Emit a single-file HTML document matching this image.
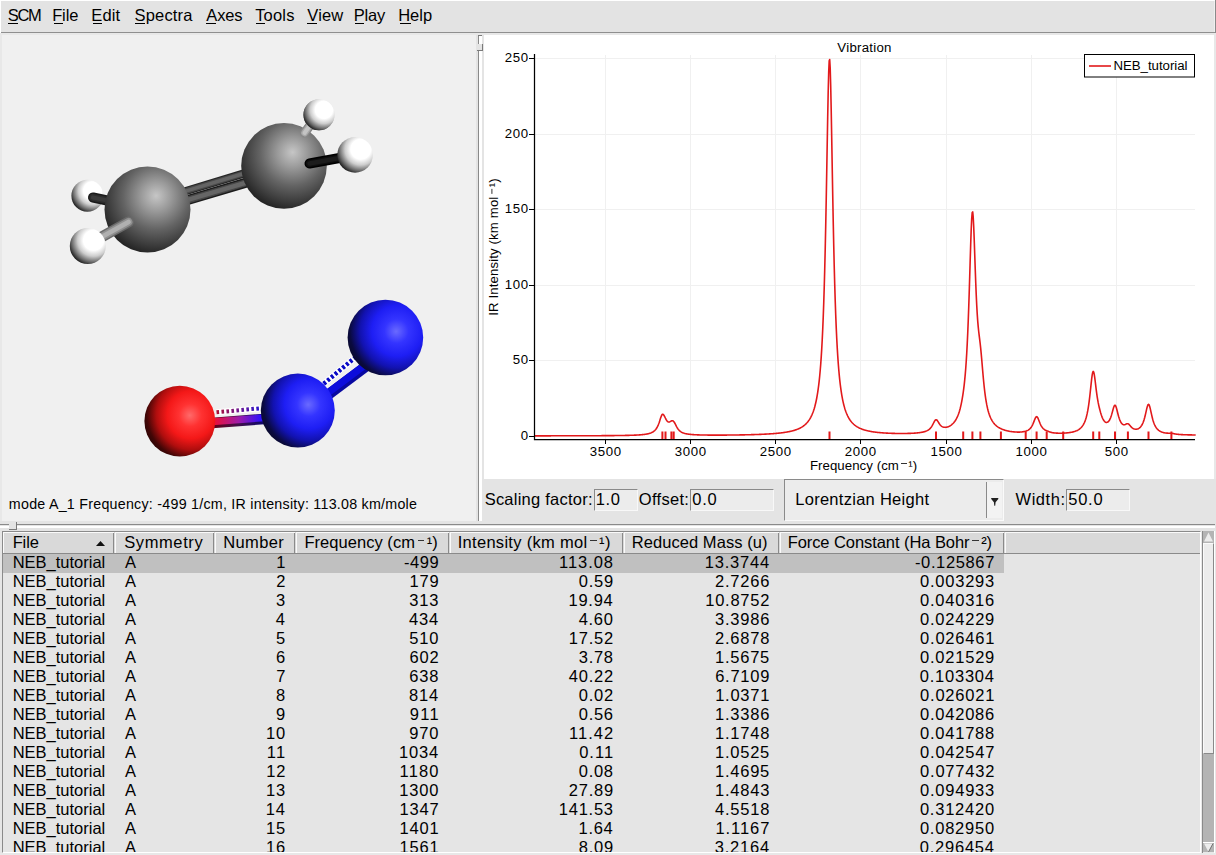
<!DOCTYPE html>
<html><head><meta charset="utf-8"><style>
html,body{margin:0;padding:0;}
body{width:1216px;height:855px;position:relative;overflow:hidden;background:#e6e6e6;font-family:"Liberation Sans",sans-serif;}
.t{position:absolute;white-space:nowrap;}
.r{position:absolute;}
.clip{position:absolute;overflow:hidden;}
.sup{font-size:0.8em;position:relative;top:-0.35em;}
.sm{display:inline-block;width:0.4em;height:1px;background:#333;vertical-align:0.42em;margin:0 0.14em 0 0.17em;}
</style></head><body>
<div class="r" style="left:0px;top:0px;width:1216px;height:855px;background:#e6e6e6;"></div>
<div class="r" style="left:0px;top:0px;width:1216px;height:1px;background:#ffffff;"></div>
<div class="r" style="left:0px;top:1px;width:1216px;height:31px;background:#e3e3e3;"></div>
<div class="r" style="left:0px;top:32px;width:1216px;height:1px;background:#8f8f8f;"></div>
<div class="r" style="left:1214px;top:1px;width:1px;height:31px;background:#efefef;"></div>
<div class="r" style="left:1215px;top:0px;width:1px;height:33px;background:#8a8a8a;"></div>
<div class="r" style="left:0px;top:0px;width:1px;height:33px;background:#ffffff;"></div>
<div class="r" style="left:0px;top:33px;width:1216px;height:2px;background:#e8e8e8;"></div>
<div class="t" id="t1" style="left:7.65px;top:6.63px;font-size:16.5px;line-height:16.5px;letter-spacing:-1.222px;color:#000;">SCM</div>
<div class="r" style="left:8px;top:23px;width:10px;height:1px;background:#000;"></div>
<div class="t" id="t2" style="left:52.15px;top:6.63px;font-size:16.5px;line-height:16.5px;letter-spacing:-0.099px;color:#000;">File</div>
<div class="r" style="left:54px;top:23px;width:9px;height:1px;background:#000;"></div>
<div class="t" id="t3" style="left:91.25px;top:6.63px;font-size:16.5px;line-height:16.5px;letter-spacing:0.154px;color:#000;">Edit</div>
<div class="r" style="left:93px;top:23px;width:9px;height:1px;background:#000;"></div>
<div class="t" id="t4" style="left:134.55px;top:6.63px;font-size:16.5px;line-height:16.5px;letter-spacing:0.162px;color:#000;">Spectra</div>
<div class="r" style="left:135px;top:23px;width:10px;height:1px;background:#000;"></div>
<div class="t" id="t5" style="left:206.27px;top:6.63px;font-size:16.5px;line-height:16.5px;letter-spacing:-0.125px;color:#000;">Axes</div>
<div class="r" style="left:206px;top:23px;width:10px;height:1px;background:#000;"></div>
<div class="t" id="t6" style="left:255.13px;top:6.63px;font-size:16.5px;line-height:16.5px;letter-spacing:0.196px;color:#000;">Tools</div>
<div class="r" style="left:256px;top:23px;width:9px;height:1px;background:#000;"></div>
<div class="t" id="t7" style="left:307.33px;top:6.63px;font-size:16.5px;line-height:16.5px;letter-spacing:0.115px;color:#000;">View</div>
<div class="r" style="left:307px;top:23px;width:10px;height:1px;background:#000;"></div>
<div class="t" id="t8" style="left:353.65px;top:6.63px;font-size:16.5px;line-height:16.5px;letter-spacing:-0.204px;color:#000;">Play</div>
<div class="r" style="left:355px;top:23px;width:9px;height:1px;background:#000;"></div>
<div class="t" id="t9" style="left:398.15px;top:6.63px;font-size:16.5px;line-height:16.5px;letter-spacing:0.065px;color:#000;">Help</div>
<div class="r" style="left:400px;top:23px;width:11px;height:1px;background:#000;"></div>
<div class="r" style="left:0px;top:35px;width:2px;height:487px;background:#e8e8e8;"></div>
<div class="r" style="left:2px;top:35px;width:474px;height:486px;background:#f0f0f0;"></div>
<svg class="r" style="left:0;top:0" width="480" height="522">
<defs>
<radialGradient id="gC" cx="0.6" cy="0.36" r="0.76" fx="0.6" fy="0.34">
 <stop offset="0" stop-color="#c6c6c6"/><stop offset="0.22" stop-color="#9c9c9c"/><stop offset="0.5" stop-color="#646464"/><stop offset="0.74" stop-color="#3c3c3c"/><stop offset="0.9" stop-color="#202020"/><stop offset="1" stop-color="#101010"/></radialGradient>
<radialGradient id="gH" cx="0.66" cy="0.34" r="0.74" fx="0.66" fy="0.34">
 <stop offset="0" stop-color="#ffffff"/><stop offset="0.38" stop-color="#ffffff"/><stop offset="0.6" stop-color="#cdcdcd"/><stop offset="0.82" stop-color="#6a6a6a"/><stop offset="1" stop-color="#101010"/></radialGradient>
<radialGradient id="gO" cx="0.68" cy="0.4" r="0.8" fx="0.64" fy="0.42">
 <stop offset="0" stop-color="#ff6a6a"/><stop offset="0.2" stop-color="#ff3232"/><stop offset="0.42" stop-color="#f41818"/><stop offset="0.62" stop-color="#b00e0e"/><stop offset="0.8" stop-color="#420606"/><stop offset="1" stop-color="#120404"/></radialGradient>
<radialGradient id="gN" cx="0.68" cy="0.4" r="0.8" fx="0.64" fy="0.42">
 <stop offset="0" stop-color="#6a6aff"/><stop offset="0.2" stop-color="#3434ff"/><stop offset="0.42" stop-color="#1e1ef4"/><stop offset="0.62" stop-color="#1212b0"/><stop offset="0.8" stop-color="#0a0a40"/><stop offset="1" stop-color="#0a0a10"/></radialGradient>
<linearGradient id="gON" x1="215" y1="0" x2="262" y2="0" gradientUnits="userSpaceOnUse">
 <stop offset="0" stop-color="#e8103a"/><stop offset="0.5" stop-color="#a01ca8"/><stop offset="1" stop-color="#2a10ff"/></linearGradient>
<linearGradient id="gONs" x1="215" y1="0" x2="262" y2="0" gradientUnits="userSpaceOnUse">
 <stop offset="0" stop-color="#b0102e"/><stop offset="0.5" stop-color="#701a90"/><stop offset="1" stop-color="#2010d0"/></linearGradient>
<linearGradient id="gONd" x1="215" y1="0" x2="262" y2="0" gradientUnits="userSpaceOnUse">
 <stop offset="0" stop-color="#60001a"/><stop offset="0.5" stop-color="#40104a"/><stop offset="1" stop-color="#10086a"/></linearGradient>
</defs>
<circle cx="87.4" cy="195.8" r="16" fill="url(#gH)"/>
<path d="M93 197.5 L112 201.5" stroke="#1a1a1a" stroke-width="10.00" stroke-linecap="round"/>
<path d="M93 197.5 L112 201.5" stroke="#2c2c2c" stroke-width="7.17" stroke-linecap="round"/>
<path d="M93 197.5 L112 201.5" stroke="#3a3a3a" stroke-width="4.33" stroke-linecap="round"/>
<path d="M316 117 L306 131" stroke="#888" stroke-width="9.00" stroke-linecap="round"/>
<path d="M316 117 L306 131" stroke="#aaa" stroke-width="6.45" stroke-linecap="round"/>
<path d="M316 117 L306 131" stroke="#c4c4c4" stroke-width="3.90" stroke-linecap="round"/>
<circle cx="319" cy="114.8" r="15.5" fill="url(#gH)"/>
<path d="M184 191.6 L243 173.8" stroke="#262626" stroke-width="8.20" stroke-linecap="butt"/>
<path d="M184 191.6 L243 173.8" stroke="#4a4a4a" stroke-width="5.88" stroke-linecap="butt"/>
<path d="M184 191.6 L243 173.8" stroke="#646464" stroke-width="3.55" stroke-linecap="butt"/>
<path d="M187 200.2 L247 182.4" stroke="#1c1c1c" stroke-width="10.00" stroke-linecap="butt"/>
<path d="M187 200.2 L247 182.4" stroke="#484848" stroke-width="7.17" stroke-linecap="butt"/>
<path d="M187 200.2 L247 182.4" stroke="#666666" stroke-width="4.33" stroke-linecap="butt"/>
<circle cx="147.5" cy="209.5" r="43" fill="url(#gC)"/>
<circle cx="284" cy="165.9" r="42.8" fill="url(#gC)"/>
<path d="M316 117 L304.5 133" stroke="#888" stroke-width="9.00" stroke-linecap="round"/>
<path d="M316 117 L304.5 133" stroke="#aaa" stroke-width="6.45" stroke-linecap="round"/>
<path d="M316 117 L304.5 133" stroke="#c4c4c4" stroke-width="3.90" stroke-linecap="round"/>
<circle cx="319" cy="114.8" r="15.5" fill="url(#gH)"/>
<path d="M309.5 163.5 L345 157" stroke="#000" stroke-width="10.00" stroke-linecap="round"/>
<path d="M309.5 163.5 L345 157" stroke="#0e0e0e" stroke-width="7.17" stroke-linecap="round"/>
<path d="M309.5 163.5 L345 157" stroke="#1c1c1c" stroke-width="4.33" stroke-linecap="round"/>
<circle cx="355.1" cy="154.9" r="17.8" fill="url(#gH)"/>
<path d="M128.5 222 L98 239" stroke="#6a6a6a" stroke-width="11.00" stroke-linecap="round"/>
<path d="M128.5 222 L98 239" stroke="#909090" stroke-width="7.88" stroke-linecap="round"/>
<path d="M128.5 222 L98 239" stroke="#b0b0b0" stroke-width="4.77" stroke-linecap="round"/>
<circle cx="87.8" cy="246" r="18" fill="url(#gH)"/>
<path d="M212 423 L264 419" stroke="url(#gONd)" stroke-width="10.5"/>
<path d="M212 421.8 L264 417.8" stroke="url(#gON)" stroke-width="7"/>
<path d="M216.5 412.3 L260 408.3" stroke="#ffffff" stroke-width="6"/>
<path d="M216.5 412.3 L260 408.3" stroke="url(#gONs)" stroke-width="4" stroke-dasharray="2.6 2.4"/>
<path d="M322.5 399 L366.5 366" stroke="#0808a0" stroke-width="10.5"/>
<path d="M321.5 397.6 L365.5 364.6" stroke="#0c0cdc" stroke-width="7"/>
<path d="M323.7 383.8 L354.6 357.9" stroke="#ffffff" stroke-width="6"/>
<path d="M323.7 383.8 L354.6 357.9" stroke="#0808c4" stroke-width="4.4" stroke-dasharray="2.8 2.1"/>
<circle cx="179.8" cy="421.1" r="35.4" fill="url(#gO)"/>
<circle cx="297.8" cy="410.6" r="37" fill="url(#gN)"/>
<circle cx="385.4" cy="337.5" r="37.8" fill="url(#gN)"/>
</svg>
<div class="t" id="t10" style="left:8.85px;top:496.94px;font-size:14.25px;line-height:14.25px;letter-spacing:0.254px;color:#000;">mode A_1 Frequency: -499 1/cm, IR intensity: 113.08 km/mole</div>
<div class="r" style="left:476px;top:35px;width:2px;height:486px;background:#e4e4e4;"></div>
<div class="r" style="left:478px;top:35px;width:1px;height:486px;background:#8a8a8a;"></div>
<div class="r" style="left:479px;top:35px;width:3px;height:486px;background:#ffffff;"></div>
<div class="r" style="left:482px;top:35px;width:2px;height:486px;background:#e4e4e4;"></div>
<div class="r" style="left:478px;top:35px;width:4px;height:1px;background:#7a7a7a;"></div>
<div class="r" style="left:477px;top:44px;width:6px;height:7px;background:#e4e4e4;border-right:1px solid #7a7a7a;border-bottom:1px solid #7a7a7a;box-sizing:border-box;"></div>
<div class="r" style="left:484px;top:35px;width:730px;height:444px;background:#ffffff;"></div>
<div class="r" style="left:1214px;top:35px;width:2px;height:444px;background:#e8e8e8;"></div>
<svg class="r" style="left:0;top:0" width="1216" height="855">
<path d="M605.5 55V439 M690.5 55V439 M775.5 55V439 M860.5 55V439 M946.5 55V439 M1031.5 55V439 M1116.5 55V439 M535 360.5H1195 M535 285.5H1195 M535 209.5H1195 M535 134.5H1195 M535 58.5H1195" stroke="#f0f0f0" stroke-width="1" fill="none"/>
<polyline points="534.7,435.85 535.2,435.85 535.7,435.85 536.2,435.85 536.7,435.85 537.2,435.84 537.7,435.84 538.2,435.84 538.7,435.84 539.2,435.84 539.7,435.84 540.2,435.84 540.7,435.84 541.2,435.84 541.7,435.84 542.2,435.84 542.7,435.84 543.2,435.84 543.7,435.84 544.2,435.84 544.7,435.83 545.2,435.83 545.7,435.83 546.2,435.83 546.7,435.83 547.2,435.83 547.7,435.83 548.2,435.83 548.7,435.83 549.2,435.83 549.7,435.83 550.2,435.83 550.7,435.83 551.2,435.82 551.7,435.82 552.2,435.82 552.7,435.82 553.2,435.82 553.7,435.82 554.2,435.82 554.7,435.82 555.2,435.82 555.7,435.82 556.2,435.82 556.7,435.82 557.2,435.81 557.7,435.81 558.2,435.81 558.7,435.81 559.2,435.81 559.7,435.81 560.2,435.81 560.7,435.81 561.2,435.81 561.7,435.81 562.2,435.81 562.7,435.80 563.2,435.80 563.7,435.80 564.2,435.80 564.7,435.80 565.2,435.80 565.7,435.80 566.2,435.80 566.7,435.80 567.2,435.79 567.7,435.79 568.2,435.79 568.7,435.79 569.2,435.79 569.7,435.79 570.2,435.79 570.7,435.79 571.2,435.79 571.7,435.78 572.2,435.78 572.7,435.78 573.2,435.78 573.7,435.78 574.2,435.78 574.7,435.78 575.2,435.78 575.7,435.77 576.2,435.77 576.7,435.77 577.2,435.77 577.7,435.77 578.2,435.77 578.7,435.77 579.2,435.76 579.7,435.76 580.2,435.76 580.7,435.76 581.2,435.76 581.7,435.76 582.2,435.76 582.7,435.75 583.2,435.75 583.7,435.75 584.2,435.75 584.7,435.75 585.2,435.75 585.7,435.74 586.2,435.74 586.7,435.74 587.2,435.74 587.7,435.74 588.2,435.74 588.7,435.73 589.2,435.73 589.7,435.73 590.2,435.73 590.7,435.73 591.2,435.72 591.7,435.72 592.2,435.72 592.7,435.72 593.2,435.72 593.7,435.71 594.2,435.71 594.7,435.71 595.2,435.71 595.7,435.70 596.2,435.70 596.7,435.70 597.2,435.70 597.7,435.69 598.2,435.69 598.7,435.69 599.2,435.69 599.7,435.68 600.2,435.68 600.7,435.68 601.2,435.68 601.7,435.67 602.2,435.67 602.7,435.67 603.2,435.66 603.7,435.66 604.2,435.66 604.7,435.65 605.2,435.65 605.7,435.65 606.2,435.64 606.7,435.64 607.2,435.64 607.7,435.63 608.2,435.63 608.7,435.63 609.2,435.62 609.7,435.62 610.2,435.61 610.7,435.61 611.2,435.60 611.7,435.60 612.2,435.60 612.7,435.59 613.2,435.59 613.7,435.58 614.2,435.58 614.7,435.57 615.2,435.57 615.7,435.56 616.2,435.55 616.7,435.55 617.2,435.54 617.7,435.54 618.2,435.53 618.7,435.52 619.2,435.52 619.7,435.51 620.2,435.50 620.7,435.50 621.2,435.49 621.7,435.48 622.2,435.47 622.7,435.47 623.2,435.46 623.7,435.45 624.2,435.44 624.7,435.43 625.2,435.42 625.7,435.41 626.2,435.40 626.7,435.39 627.2,435.38 627.7,435.37 628.2,435.35 628.7,435.34 629.2,435.33 629.7,435.32 630.2,435.30 630.7,435.29 631.2,435.27 631.7,435.26 632.2,435.24 632.7,435.22 633.2,435.21 633.7,435.19 634.2,435.17 634.7,435.15 635.2,435.12 635.7,435.10 636.2,435.08 636.7,435.05 637.2,435.03 637.7,435.00 638.2,434.97 638.7,434.94 639.2,434.91 639.7,434.87 640.2,434.84 640.7,434.80 641.2,434.76 641.7,434.71 642.2,434.67 642.7,434.62 643.2,434.56 643.7,434.51 644.2,434.45 644.7,434.38 645.2,434.31 645.7,434.23 646.2,434.15 646.7,434.06 647.2,433.97 647.7,433.86 648.2,433.75 648.7,433.63 649.2,433.49 649.7,433.34 650.2,433.18 650.7,433.00 651.2,432.80 651.7,432.58 652.2,432.33 652.7,432.05 653.2,431.74 653.7,431.39 654.2,430.99 654.7,430.54 655.2,430.03 655.7,429.45 656.2,428.79 656.7,428.03 657.2,427.16 657.7,426.17 658.2,425.05 658.7,423.79 659.2,422.40 659.7,420.90 660.2,419.34 660.7,417.81 661.2,416.41 661.7,415.29 662.2,414.54 662.7,414.25 663.2,414.41 663.7,414.95 664.2,415.77 664.7,416.74 665.2,417.76 665.7,418.75 666.2,419.66 666.7,420.46 667.2,421.11 667.7,421.59 668.2,421.90 668.7,422.04 669.2,422.02 669.7,421.87 670.2,421.62 670.7,421.33 671.2,421.05 671.7,420.83 672.2,420.72 672.7,420.78 673.2,421.04 673.7,421.50 674.2,422.17 674.7,423.00 675.2,423.94 675.7,424.93 676.2,425.91 676.7,426.84 677.2,427.71 677.7,428.49 678.2,429.18 678.7,429.80 679.2,430.35 679.7,430.82 680.2,431.24 680.7,431.61 681.2,431.94 681.7,432.23 682.2,432.48 682.7,432.71 683.2,432.91 683.7,433.09 684.2,433.26 684.7,433.40 685.2,433.54 685.7,433.66 686.2,433.77 686.7,433.87 687.2,433.96 687.7,434.04 688.2,434.12 688.7,434.19 689.2,434.25 689.7,434.31 690.2,434.37 690.7,434.42 691.2,434.47 691.7,434.51 692.2,434.55 692.7,434.59 693.2,434.63 693.7,434.66 694.2,434.69 694.7,434.72 695.2,434.75 695.7,434.78 696.2,434.80 696.7,434.82 697.2,434.84 697.7,434.86 698.2,434.88 698.7,434.90 699.2,434.91 699.7,434.93 700.2,434.94 700.7,434.96 701.2,434.97 701.7,434.98 702.2,434.99 702.7,435.00 703.2,435.01 703.7,435.02 704.2,435.03 704.7,435.04 705.2,435.05 705.7,435.06 706.2,435.06 706.7,435.07 707.2,435.07 707.7,435.08 708.2,435.08 708.7,435.09 709.2,435.09 709.7,435.10 710.2,435.10 710.7,435.10 711.2,435.11 711.7,435.11 712.2,435.11 712.7,435.11 713.2,435.11 713.7,435.12 714.2,435.12 714.7,435.12 715.2,435.12 715.7,435.12 716.2,435.12 716.7,435.12 717.2,435.12 717.7,435.12 718.2,435.12 718.7,435.12 719.2,435.11 719.7,435.11 720.2,435.11 720.7,435.11 721.2,435.11 721.7,435.11 722.2,435.10 722.7,435.10 723.2,435.10 723.7,435.10 724.2,435.09 724.7,435.09 725.2,435.09 725.7,435.08 726.2,435.08 726.7,435.08 727.2,435.07 727.7,435.07 728.2,435.06 728.7,435.06 729.2,435.06 729.7,435.05 730.2,435.05 730.7,435.04 731.2,435.03 731.7,435.03 732.2,435.02 732.7,435.02 733.2,435.01 733.7,435.01 734.2,435.00 734.7,434.99 735.2,434.99 735.7,434.98 736.2,434.97 736.7,434.97 737.2,434.96 737.7,434.95 738.2,434.94 738.7,434.94 739.2,434.93 739.7,434.92 740.2,434.91 740.7,434.90 741.2,434.89 741.7,434.88 742.2,434.88 742.7,434.87 743.2,434.86 743.7,434.85 744.2,434.84 744.7,434.83 745.2,434.82 745.7,434.81 746.2,434.79 746.7,434.78 747.2,434.77 747.7,434.76 748.2,434.75 748.7,434.74 749.2,434.72 749.7,434.71 750.2,434.70 750.7,434.68 751.2,434.67 751.7,434.66 752.2,434.64 752.7,434.63 753.2,434.61 753.7,434.60 754.2,434.58 754.7,434.57 755.2,434.55 755.7,434.53 756.2,434.52 756.7,434.50 757.2,434.48 757.7,434.47 758.2,434.45 758.7,434.43 759.2,434.41 759.7,434.39 760.2,434.37 760.7,434.35 761.2,434.33 761.7,434.31 762.2,434.28 762.7,434.26 763.2,434.24 763.7,434.22 764.2,434.19 764.7,434.17 765.2,434.14 765.7,434.12 766.2,434.09 766.7,434.06 767.2,434.04 767.7,434.01 768.2,433.98 768.7,433.95 769.2,433.92 769.7,433.89 770.2,433.85 770.7,433.82 771.2,433.79 771.7,433.75 772.2,433.72 772.7,433.68 773.2,433.64 773.7,433.60 774.2,433.56 774.7,433.52 775.2,433.48 775.7,433.44 776.2,433.39 776.7,433.35 777.2,433.30 777.7,433.25 778.2,433.20 778.7,433.15 779.2,433.10 779.7,433.05 780.2,432.99 780.7,432.93 781.2,432.87 781.7,432.81 782.2,432.75 782.7,432.69 783.2,432.62 783.7,432.55 784.2,432.48 784.7,432.40 785.2,432.33 785.7,432.25 786.2,432.17 786.7,432.08 787.2,431.99 787.7,431.90 788.2,431.81 788.7,431.71 789.2,431.61 789.7,431.51 790.2,431.40 790.7,431.29 791.2,431.17 791.7,431.05 792.2,430.92 792.7,430.79 793.2,430.65 793.7,430.51 794.2,430.36 794.7,430.21 795.2,430.05 795.7,429.88 796.2,429.70 796.7,429.52 797.2,429.33 797.7,429.12 798.2,428.91 798.7,428.69 799.2,428.46 799.7,428.22 800.2,427.97 800.7,427.70 801.2,427.42 801.7,427.12 802.2,426.81 802.7,426.48 803.2,426.13 803.7,425.76 804.2,425.37 804.7,424.96 805.2,424.53 805.7,424.07 806.2,423.57 806.7,423.05 807.2,422.50 807.7,421.90 808.2,421.27 808.7,420.59 809.2,419.87 809.7,419.09 810.2,418.26 810.7,417.36 811.2,416.40 811.7,415.36 812.2,414.23 812.7,413.01 813.2,411.68 813.7,410.24 814.2,408.67 814.7,406.95 815.2,405.07 815.7,403.01 816.2,400.74 816.7,398.23 817.2,395.45 817.7,392.37 818.2,388.94 818.7,385.11 819.2,380.81 819.7,375.99 820.2,370.54 820.7,364.37 821.2,357.37 821.7,349.39 822.2,340.27 822.7,329.83 823.2,317.85 823.7,304.08 824.2,288.29 824.7,270.21 825.2,249.66 825.7,226.52 826.2,200.92 826.7,173.30 827.2,144.66 827.7,116.62 828.2,91.50 828.7,72.02 829.2,60.77 829.7,59.46 830.2,68.28 830.7,85.89 831.2,109.84 831.7,137.37 832.2,166.04 832.7,194.03 833.2,220.20 833.7,243.99 834.2,265.19 834.7,283.88 835.2,300.22 835.7,314.48 836.2,326.89 836.7,337.70 837.2,347.13 837.7,355.38 838.2,362.61 838.7,368.97 839.2,374.59 839.7,379.57 840.2,383.99 840.7,387.93 841.2,391.45 841.7,394.61 842.2,397.46 842.7,400.03 843.2,402.35 843.7,404.46 844.2,406.38 844.7,408.14 845.2,409.74 845.7,411.21 846.2,412.56 846.7,413.80 847.2,414.95 847.7,416.01 848.2,416.99 848.7,417.90 849.2,418.74 849.7,419.53 850.2,420.26 850.7,420.94 851.2,421.58 851.7,422.18 852.2,422.74 852.7,423.27 853.2,423.76 853.7,424.23 854.2,424.67 854.7,425.08 855.2,425.47 855.7,425.84 856.2,426.19 856.7,426.51 857.2,426.83 857.7,427.12 858.2,427.40 858.7,427.67 859.2,427.92 859.7,428.16 860.2,428.39 860.7,428.61 861.2,428.82 861.7,429.02 862.2,429.21 862.7,429.39 863.2,429.56 863.7,429.73 864.2,429.89 864.7,430.04 865.2,430.18 865.7,430.32 866.2,430.45 866.7,430.58 867.2,430.70 867.7,430.82 868.2,430.93 868.7,431.04 869.2,431.14 869.7,431.24 870.2,431.34 870.7,431.43 871.2,431.52 871.7,431.61 872.2,431.69 872.7,431.77 873.2,431.84 873.7,431.92 874.2,431.99 874.7,432.06 875.2,432.12 875.7,432.18 876.2,432.25 876.7,432.30 877.2,432.36 877.7,432.42 878.2,432.47 878.7,432.52 879.2,432.57 879.7,432.61 880.2,432.66 880.7,432.70 881.2,432.74 881.7,432.79 882.2,432.82 882.7,432.86 883.2,432.90 883.7,432.93 884.2,432.97 884.7,433.00 885.2,433.03 885.7,433.06 886.2,433.09 886.7,433.12 887.2,433.14 887.7,433.17 888.2,433.19 888.7,433.21 889.2,433.24 889.7,433.26 890.2,433.28 890.7,433.30 891.2,433.31 891.7,433.33 892.2,433.35 892.7,433.36 893.2,433.38 893.7,433.39 894.2,433.40 894.7,433.42 895.2,433.43 895.7,433.44 896.2,433.45 896.7,433.46 897.2,433.46 897.7,433.47 898.2,433.48 898.7,433.48 899.2,433.49 899.7,433.49 900.2,433.49 900.7,433.49 901.2,433.49 901.7,433.49 902.2,433.49 902.7,433.49 903.2,433.49 903.7,433.49 904.2,433.48 904.7,433.48 905.2,433.47 905.7,433.46 906.2,433.45 906.7,433.44 907.2,433.43 907.7,433.42 908.2,433.41 908.7,433.40 909.2,433.38 909.7,433.37 910.2,433.35 910.7,433.33 911.2,433.31 911.7,433.29 912.2,433.26 912.7,433.24 913.2,433.21 913.7,433.18 914.2,433.15 914.7,433.12 915.2,433.08 915.7,433.05 916.2,433.01 916.7,432.96 917.2,432.92 917.7,432.87 918.2,432.82 918.7,432.76 919.2,432.70 919.7,432.64 920.2,432.57 920.7,432.49 921.2,432.41 921.7,432.33 922.2,432.23 922.7,432.13 923.2,432.02 923.7,431.90 924.2,431.77 924.7,431.62 925.2,431.47 925.7,431.29 926.2,431.09 926.7,430.88 927.2,430.64 927.7,430.36 928.2,430.06 928.7,429.72 929.2,429.33 929.7,428.88 930.2,428.38 930.7,427.81 931.2,427.16 931.7,426.43 932.2,425.61 932.7,424.71 933.2,423.75 933.7,422.75 934.2,421.77 934.7,420.90 935.2,420.21 935.7,419.79 936.2,419.69 936.7,419.92 937.2,420.42 937.7,421.12 938.2,421.92 938.7,422.74 939.2,423.54 939.7,424.27 940.2,424.91 940.7,425.47 941.2,425.93 941.7,426.32 942.2,426.63 942.7,426.88 943.2,427.06 943.7,427.19 944.2,427.28 944.7,427.32 945.2,427.33 945.7,427.30 946.2,427.24 946.7,427.15 947.2,427.03 947.7,426.88 948.2,426.70 948.7,426.49 949.2,426.26 949.7,426.00 950.2,425.71 950.7,425.39 951.2,425.04 951.7,424.65 952.2,424.23 952.7,423.77 953.2,423.27 953.7,422.72 954.2,422.13 954.7,421.48 955.2,420.77 955.7,419.99 956.2,419.14 956.7,418.21 957.2,417.18 957.7,416.06 958.2,414.82 958.7,413.45 959.2,411.94 959.7,410.27 960.2,408.42 960.7,406.38 961.2,404.13 961.7,401.64 962.2,398.91 962.7,395.90 963.2,392.59 963.7,388.91 964.2,384.79 964.7,380.14 965.2,374.84 965.7,368.76 966.2,361.76 966.7,353.69 967.2,344.41 967.7,333.77 968.2,321.65 968.7,308.01 969.2,292.95 969.7,276.77 970.2,260.08 970.7,243.88 971.2,229.54 971.7,218.60 972.2,212.46 972.7,211.94 973.2,216.95 973.7,226.57 974.2,239.32 974.7,253.62 975.2,268.11 975.7,281.80 976.2,294.10 976.7,304.71 977.2,313.59 977.7,320.83 978.2,326.69 978.7,331.49 979.2,335.65 979.7,339.60 980.2,343.76 980.7,348.40 981.2,353.59 981.7,359.24 982.2,365.14 982.7,371.03 983.2,376.70 983.7,382.00 984.2,386.85 984.7,391.23 985.2,395.14 985.7,398.62 986.2,401.70 986.7,404.44 987.2,406.87 987.7,409.03 988.2,410.96 988.7,412.69 989.2,414.23 989.7,415.63 990.2,416.88 990.7,418.02 991.2,419.05 991.7,420.00 992.2,420.85 992.7,421.64 993.2,422.36 993.7,423.03 994.2,423.64 994.7,424.20 995.2,424.72 995.7,425.20 996.2,425.65 996.7,426.07 997.2,426.45 997.7,426.81 998.2,427.15 998.7,427.46 999.2,427.75 999.7,428.03 1000.2,428.29 1000.7,428.53 1001.2,428.77 1001.7,428.99 1002.2,429.21 1002.7,429.41 1003.2,429.61 1003.7,429.79 1004.2,429.97 1004.7,430.13 1005.2,430.29 1005.7,430.43 1006.2,430.57 1006.7,430.70 1007.2,430.82 1007.7,430.94 1008.2,431.05 1008.7,431.15 1009.2,431.24 1009.7,431.34 1010.2,431.42 1010.7,431.50 1011.2,431.57 1011.7,431.64 1012.2,431.71 1012.7,431.77 1013.2,431.82 1013.7,431.87 1014.2,431.92 1014.7,431.96 1015.2,431.99 1015.7,432.02 1016.2,432.05 1016.7,432.07 1017.2,432.09 1017.7,432.10 1018.2,432.10 1018.7,432.10 1019.2,432.09 1019.7,432.08 1020.2,432.06 1020.7,432.03 1021.2,431.99 1021.7,431.94 1022.2,431.89 1022.7,431.82 1023.2,431.74 1023.7,431.65 1024.2,431.55 1024.7,431.43 1025.2,431.30 1025.7,431.16 1026.2,431.00 1026.7,430.82 1027.2,430.61 1027.7,430.37 1028.2,430.09 1028.7,429.78 1029.2,429.40 1029.7,428.97 1030.2,428.47 1030.7,427.89 1031.2,427.21 1031.7,426.43 1032.2,425.54 1032.7,424.53 1033.2,423.40 1033.7,422.16 1034.2,420.87 1034.7,419.58 1035.2,418.40 1035.7,417.44 1036.2,416.83 1036.7,416.66 1037.2,416.95 1037.7,417.67 1038.2,418.70 1038.7,419.93 1039.2,421.23 1039.7,422.51 1040.2,423.72 1040.7,424.81 1041.2,425.79 1041.7,426.64 1042.2,427.37 1042.7,428.00 1043.2,428.54 1043.7,428.99 1044.2,429.38 1044.7,429.71 1045.2,429.99 1045.7,430.25 1046.2,430.48 1046.7,430.70 1047.2,430.92 1047.7,431.14 1048.2,431.35 1048.7,431.56 1049.2,431.75 1049.7,431.93 1050.2,432.09 1050.7,432.24 1051.2,432.37 1051.7,432.49 1052.2,432.60 1052.7,432.69 1053.2,432.77 1053.7,432.84 1054.2,432.91 1054.7,432.96 1055.2,433.01 1055.7,433.05 1056.2,433.09 1056.7,433.12 1057.2,433.14 1057.7,433.16 1058.2,433.18 1058.7,433.19 1059.2,433.20 1059.7,433.20 1060.2,433.20 1060.7,433.19 1061.2,433.19 1061.7,433.18 1062.2,433.16 1062.7,433.15 1063.2,433.13 1063.7,433.11 1064.2,433.08 1064.7,433.05 1065.2,433.02 1065.7,432.99 1066.2,432.95 1066.7,432.91 1067.2,432.86 1067.7,432.81 1068.2,432.76 1068.7,432.70 1069.2,432.63 1069.7,432.56 1070.2,432.48 1070.7,432.40 1071.2,432.31 1071.7,432.21 1072.2,432.11 1072.7,431.99 1073.2,431.87 1073.7,431.74 1074.2,431.59 1074.7,431.44 1075.2,431.27 1075.7,431.08 1076.2,430.88 1076.7,430.67 1077.2,430.43 1077.7,430.18 1078.2,429.90 1078.7,429.59 1079.2,429.25 1079.7,428.88 1080.2,428.47 1080.7,428.02 1081.2,427.52 1081.7,426.96 1082.2,426.34 1082.7,425.65 1083.2,424.87 1083.7,423.99 1084.2,423.00 1084.7,421.88 1085.2,420.60 1085.7,419.15 1086.2,417.49 1086.7,415.59 1087.2,413.41 1087.7,410.91 1088.2,408.05 1088.7,404.79 1089.2,401.10 1089.7,397.00 1090.2,392.53 1090.7,387.81 1091.2,383.08 1091.7,378.65 1092.2,374.96 1092.7,372.45 1093.2,371.44 1093.7,372.05 1094.2,374.14 1094.7,377.36 1095.2,381.27 1095.7,385.45 1096.2,389.56 1096.7,393.40 1097.2,396.86 1097.7,399.93 1098.2,402.64 1098.7,405.05 1099.2,407.24 1099.7,409.26 1100.2,411.15 1100.7,412.92 1101.2,414.55 1101.7,416.03 1102.2,417.35 1102.7,418.50 1103.2,419.49 1103.7,420.33 1104.2,421.01 1104.7,421.56 1105.2,421.97 1105.7,422.25 1106.2,422.41 1106.7,422.44 1107.2,422.34 1107.7,422.12 1108.2,421.76 1108.7,421.25 1109.2,420.57 1109.7,419.73 1110.2,418.69 1110.7,417.46 1111.2,416.02 1111.7,414.39 1112.2,412.60 1112.7,410.72 1113.2,408.88 1113.7,407.24 1114.2,405.99 1114.7,405.31 1115.2,405.32 1115.7,406.03 1116.2,407.33 1116.7,409.06 1117.2,411.01 1117.7,413.01 1118.2,414.95 1118.7,416.74 1119.2,418.34 1119.7,419.74 1120.2,420.94 1120.7,421.95 1121.2,422.78 1121.7,423.45 1122.2,423.97 1122.7,424.35 1123.2,424.61 1123.7,424.74 1124.2,424.76 1124.7,424.68 1125.2,424.51 1125.7,424.29 1126.2,424.04 1126.7,423.83 1127.2,423.69 1127.7,423.69 1128.2,423.85 1128.7,424.17 1129.2,424.63 1129.7,425.18 1130.2,425.76 1130.7,426.35 1131.2,426.90 1131.7,427.39 1132.2,427.83 1132.7,428.20 1133.2,428.51 1133.7,428.75 1134.2,428.94 1134.7,429.08 1135.2,429.17 1135.7,429.21 1136.2,429.20 1136.7,429.15 1137.2,429.05 1137.7,428.90 1138.2,428.70 1138.7,428.44 1139.2,428.13 1139.7,427.75 1140.2,427.29 1140.7,426.75 1141.2,426.11 1141.7,425.36 1142.2,424.48 1142.7,423.45 1143.2,422.26 1143.7,420.89 1144.2,419.31 1144.7,417.52 1145.2,415.53 1145.7,413.38 1146.2,411.13 1146.7,408.92 1147.2,406.93 1147.7,405.38 1148.2,404.47 1148.7,404.35 1149.2,405.04 1149.7,406.45 1150.2,408.37 1150.7,410.58 1151.2,412.90 1151.7,415.17 1152.2,417.29 1152.7,419.23 1153.2,420.96 1153.7,422.48 1154.2,423.82 1154.7,424.98 1155.2,426.00 1155.7,426.88 1156.2,427.66 1156.7,428.33 1157.2,428.93 1157.7,429.45 1158.2,429.91 1158.7,430.32 1159.2,430.68 1159.7,431.01 1160.2,431.29 1160.7,431.55 1161.2,431.78 1161.7,431.99 1162.2,432.17 1162.7,432.34 1163.2,432.49 1163.7,432.62 1164.2,432.73 1164.7,432.84 1165.2,432.92 1165.7,433.00 1166.2,433.06 1166.7,433.11 1167.2,433.15 1167.7,433.17 1168.2,433.18 1168.7,433.19 1169.2,433.18 1169.7,433.18 1170.2,433.18 1170.7,433.20 1171.2,433.23 1171.7,433.28 1172.2,433.35 1172.7,433.44 1173.2,433.54 1173.7,433.65 1174.2,433.75 1174.7,433.85 1175.2,433.94 1175.7,434.03 1176.2,434.11 1176.7,434.18 1177.2,434.24 1177.7,434.30 1178.2,434.35 1178.7,434.40 1179.2,434.44 1179.7,434.48 1180.2,434.52 1180.7,434.55 1181.2,434.58 1181.7,434.61 1182.2,434.64 1182.7,434.66 1183.2,434.68 1183.7,434.71 1184.2,434.73 1184.7,434.74 1185.2,434.76 1185.7,434.78 1186.2,434.80 1186.7,434.81 1187.2,434.82 1187.7,434.84 1188.2,434.85 1188.7,434.86 1189.2,434.87 1189.7,434.88 1190.2,434.89 1190.7,434.90 1191.2,434.91 1191.7,434.92 1192.2,434.93 1192.7,434.94 1193.2,434.95 1193.7,434.95 1194.2,434.96 1194.7,434.96 1195.2,434.97 1195.7,434.98" fill="none" stroke="#e2191b" stroke-width="1.6" stroke-linejoin="round"/>
<path d="M1171.4 431.5V439 M1148.5 431.5V439 M1127.9 431.5V439 M1115.0 431.5V439 M1099.3 431.5V439 M1093.2 431.5V439 M1063.2 431.5V439 M1046.7 431.5V439 M1036.6 431.5V439 M1025.7 431.5V439 M1000.9 431.5V439 M980.4 431.5V439 M972.4 431.5V439 M963.2 431.5V439 M936.0 431.5V439 M829.5 431.5V439 M673.7 431.5V439 M671.4 431.5V439 M665.5 431.5V439 M662.4 431.5V439" stroke="#e2191b" stroke-width="2" fill="none"/>
<path d="M534.5 54V439.5H1195" stroke="#000" stroke-width="1.25" fill="none"/>
<path d="M529 436.5H534 M529 360.5H534 M529 285.5H534 M529 209.5H534 M529 134.5H534 M529 58.5H534 M605.5 439V444 M690.5 439V444 M775.5 439V444 M860.5 439V444 M946.5 439V444 M1031.5 439V444 M1116.5 439V444" stroke="#000" stroke-width="1" fill="none"/>
<rect x="1084.5" y="54.5" width="110" height="22.5" fill="#fff" stroke="#000" stroke-width="1"/>
<path d="M1089 66H1111" stroke="#e2191b" stroke-width="1.6"/>
</svg>
<div class="t" id="t137" style="left:520.65px;top:429.28px;font-size:13.25px;line-height:13.25px;letter-spacing:0.631px;color:#000;">0</div>
<div class="t" id="t138" style="left:512.65px;top:353.28px;font-size:13.25px;line-height:13.25px;letter-spacing:0.631px;color:#000;">50</div>
<div class="t" id="t139" style="left:504.65px;top:278.28px;font-size:13.25px;line-height:13.25px;letter-spacing:0.631px;color:#000;">100</div>
<div class="t" id="t140" style="left:504.65px;top:202.28px;font-size:13.25px;line-height:13.25px;letter-spacing:0.631px;color:#000;">150</div>
<div class="t" id="t141" style="left:504.65px;top:127.28px;font-size:13.25px;line-height:13.25px;letter-spacing:0.631px;color:#000;">200</div>
<div class="t" id="t142" style="left:504.65px;top:51.28px;font-size:13.25px;line-height:13.25px;letter-spacing:0.631px;color:#000;">250</div>
<div class="t" id="t143" style="left:589.82px;top:445.08px;font-size:13.25px;line-height:13.25px;letter-spacing:0.631px;color:#000;">3500</div>
<div class="t" id="t144" style="left:674.82px;top:445.08px;font-size:13.25px;line-height:13.25px;letter-spacing:0.631px;color:#000;">3000</div>
<div class="t" id="t145" style="left:759.74px;top:445.08px;font-size:13.25px;line-height:13.25px;letter-spacing:0.631px;color:#000;">2500</div>
<div class="t" id="t146" style="left:844.74px;top:445.08px;font-size:13.25px;line-height:13.25px;letter-spacing:0.631px;color:#000;">2000</div>
<div class="t" id="t147" style="left:930.57px;top:445.08px;font-size:13.25px;line-height:13.25px;letter-spacing:0.631px;color:#000;">1500</div>
<div class="t" id="t148" style="left:1015.57px;top:445.08px;font-size:13.25px;line-height:13.25px;letter-spacing:0.631px;color:#000;">1000</div>
<div class="t" id="t149" style="left:1104.81px;top:445.08px;font-size:13.25px;line-height:13.25px;letter-spacing:0.631px;color:#000;">500</div>
<div class="t" id="t150" style="left:809.89px;top:458.78px;font-size:13.25px;line-height:13.25px;letter-spacing:0.055px;color:#000;">Frequency (cm<span class="sm"></span>¹)</div>
<div class="t" id="t151" style="left:837.32px;top:40.78px;font-size:13.25px;line-height:13.25px;letter-spacing:0.264px;color:#000;">Vibration</div>
<div class="t" id="t152" style="left:1113.41px;top:58.78px;font-size:13.25px;line-height:13.25px;letter-spacing:-0.023px;color:#000;">NEB_tutorial</div>
<div class="t" style="left:493.5px;top:247px;width:0;height:0;"><div style="position:absolute;left:0;top:0;transform:translate(-50%,-50%) rotate(-90deg);white-space:nowrap;font-size:13.2px;line-height:13.2px;letter-spacing:0.14px;">IR Intensity (km mol<span class="sm"></span>¹)</div></div>
<div class="r" style="left:484px;top:479px;width:732px;height:42px;background:#e4e4e4;"></div>
<div class="t" id="t11" style="left:484.65px;top:491.03px;font-size:16.5px;line-height:16.5px;letter-spacing:0.236px;color:#000;">Scaling factor:</div>
<div class="r" style="left:594px;top:489px;width:44px;height:22px;background:#ececec;border-top:1px solid #8a8a8a;border-left:1px solid #8a8a8a;border-right:1px solid #f8f8f8;border-bottom:1px solid #f8f8f8;box-sizing:border-box;"></div>
<div class="t" id="t12" style="left:595.74px;top:491.03px;font-size:16.5px;line-height:16.5px;letter-spacing:0.688px;color:#000;">1.0</div>
<div class="t" id="t13" style="left:638.82px;top:491.03px;font-size:16.5px;line-height:16.5px;letter-spacing:0.293px;color:#000;">Offset:</div>
<div class="r" style="left:690px;top:489px;width:84px;height:22px;background:#ececec;border-top:1px solid #8a8a8a;border-left:1px solid #8a8a8a;border-right:1px solid #f8f8f8;border-bottom:1px solid #f8f8f8;box-sizing:border-box;"></div>
<div class="t" id="t14" style="left:692.36px;top:491.03px;font-size:16.5px;line-height:16.5px;letter-spacing:0.688px;color:#000;">0.0</div>
<div class="r" style="left:784px;top:479px;width:220px;height:42px;background:#ececec;border-top:1px solid #8a8a8a;border-left:1px solid #8a8a8a;border-right:1px solid #fafafa;border-bottom:1px solid #fafafa;box-sizing:border-box;"></div>
<div class="t" id="t15" style="left:795.25px;top:491.03px;font-size:16.5px;line-height:16.5px;letter-spacing:0.274px;color:#000;">Lorentzian Height</div>
<div class="r" style="left:986px;top:482px;width:1px;height:36px;background:#8a8a8a;"></div>
<div class="r" style="left:987px;top:482px;width:15px;height:36px;background:#f3f3f3;"></div>
<svg class="r" style="left:989px;top:496px" width="12" height="12"><path d="M2.2 2 L9.3 2 L9.3 3 L6.6 6.2 L6.2 9.8 L5.3 9.8 L4.9 6.2 L2.2 3 Z" fill="#222"/></svg>
<div class="t" id="t16" style="left:1015.53px;top:491.03px;font-size:16.5px;line-height:16.5px;letter-spacing:0.540px;color:#000;">Width:</div>
<div class="r" style="left:1066px;top:489px;width:64px;height:22px;background:#ececec;border-top:1px solid #8a8a8a;border-left:1px solid #8a8a8a;border-right:1px solid #f8f8f8;border-bottom:1px solid #f8f8f8;box-sizing:border-box;"></div>
<div class="t" id="t17" style="left:1068.34px;top:491.03px;font-size:16.5px;line-height:16.5px;letter-spacing:0.721px;color:#000;">50.0</div>
<div class="r" style="left:0px;top:521px;width:1216px;height:10px;background:#e4e4e4;"></div>
<div class="r" style="left:0px;top:524px;width:1215px;height:1px;background:#8a8a8a;"></div>
<div class="r" style="left:0px;top:526px;width:1215px;height:2px;background:#ffffff;"></div>
<div class="r" style="left:9px;top:522px;width:8px;height:8px;background:#e4e4e4;border-right:1px solid #7a7a7a;border-bottom:1px solid #7a7a7a;box-sizing:border-box;"></div>
<div class="r" style="left:2px;top:531px;width:1199px;height:322px;background:#e5e5e5;border-top:1px solid #8a8a8a;border-left:1px solid #8a8a8a;border-right:1px solid #ffffff;border-bottom:1px solid #ffffff;box-sizing:border-box;"></div>
<div class="r" style="left:3px;top:532px;width:1197px;height:22px;background:#d9d9d9;"></div>
<div class="r" style="left:3px;top:553px;width:1197px;height:1px;background:#8a8a8a;"></div>
<div class="r" style="left:3px;top:532px;width:111px;height:1px;background:#fafafa;"></div>
<div class="r" style="left:3px;top:532px;width:1px;height:21px;background:#fafafa;"></div>
<div class="r" style="left:113px;top:533px;width:1px;height:20px;background:#8a8a8a;"></div>
<div class="r" style="left:115px;top:532px;width:99px;height:1px;background:#fafafa;"></div>
<div class="r" style="left:115px;top:532px;width:1px;height:21px;background:#fafafa;"></div>
<div class="r" style="left:213px;top:533px;width:1px;height:20px;background:#8a8a8a;"></div>
<div class="r" style="left:215px;top:532px;width:80px;height:1px;background:#fafafa;"></div>
<div class="r" style="left:215px;top:532px;width:1px;height:21px;background:#fafafa;"></div>
<div class="r" style="left:294px;top:533px;width:1px;height:20px;background:#8a8a8a;"></div>
<div class="r" style="left:296px;top:532px;width:153px;height:1px;background:#fafafa;"></div>
<div class="r" style="left:296px;top:532px;width:1px;height:21px;background:#fafafa;"></div>
<div class="r" style="left:448px;top:533px;width:1px;height:20px;background:#8a8a8a;"></div>
<div class="r" style="left:450px;top:532px;width:173px;height:1px;background:#fafafa;"></div>
<div class="r" style="left:450px;top:532px;width:1px;height:21px;background:#fafafa;"></div>
<div class="r" style="left:622px;top:533px;width:1px;height:20px;background:#8a8a8a;"></div>
<div class="r" style="left:624px;top:532px;width:155px;height:1px;background:#fafafa;"></div>
<div class="r" style="left:624px;top:532px;width:1px;height:21px;background:#fafafa;"></div>
<div class="r" style="left:778px;top:533px;width:1px;height:20px;background:#8a8a8a;"></div>
<div class="r" style="left:780px;top:532px;width:224px;height:1px;background:#fafafa;"></div>
<div class="r" style="left:780px;top:532px;width:1px;height:21px;background:#fafafa;"></div>
<div class="r" style="left:1003px;top:533px;width:1px;height:20px;background:#8a8a8a;"></div>
<div class="r" style="left:1005px;top:532px;width:195px;height:1px;background:#fafafa;"></div>
<div class="r" style="left:1005px;top:532px;width:1px;height:21px;background:#fafafa;"></div>
<div class="t" id="t18" style="left:12.65px;top:533.53px;font-size:16.5px;line-height:16.5px;letter-spacing:-0.099px;color:#000;">File</div>
<div class="t" id="t19" style="left:124.25px;top:533.53px;font-size:16.5px;line-height:16.5px;letter-spacing:0.594px;color:#000;">Symmetry</div>
<div class="t" id="t20" style="left:223.25px;top:533.53px;font-size:16.5px;line-height:16.5px;letter-spacing:0.386px;color:#000;">Number</div>
<div class="t" id="t21" style="left:304.45px;top:533.53px;font-size:16.5px;line-height:16.5px;letter-spacing:0.038px;color:#000;">Frequency (cm<span class="sm"></span>¹)</div>
<div class="t" id="t22" style="left:457.68px;top:533.53px;font-size:16.5px;line-height:16.5px;letter-spacing:0.297px;color:#000;">Intensity (km mol<span class="sm"></span>¹)</div>
<div class="t" id="t23" style="left:631.65px;top:533.53px;font-size:16.5px;line-height:16.5px;letter-spacing:0.075px;color:#000;">Reduced Mass (u)</div>
<div class="t" id="t24" style="left:787.65px;top:533.53px;font-size:16.5px;line-height:16.5px;letter-spacing:-0.068px;color:#000;">Force Constant (Ha Bohr<span class="sm"></span>²)</div>
<svg class="r" style="left:95px;top:538px" width="12" height="10"><path d="M1 8 L10 8 L5.5 3 Z" fill="#111"/></svg>
<div class="clip" style="left:3px;top:554px;width:1197px;height:298px;">
<div class="r" style="left:0px;top:0px;width:1001px;height:19px;background:#c0c0c0;"></div>
<div class="t" id="t25" style="left:9.65px;top:-0.27px;font-size:16.5px;line-height:16.5px;letter-spacing:-0.000px;color:#000;">NEB_tutorial</div>
<div class="t" id="t26" style="left:121.97px;top:-0.27px;font-size:16.5px;line-height:16.5px;letter-spacing:-0.745px;color:#000;">A</div>
<div class="t" id="t27" style="left:273.13px;top:-0.27px;font-size:16.5px;line-height:16.5px;letter-spacing:0.823px;color:#000;">1</div>
<div class="t" id="t28" style="left:401.08px;top:-0.27px;font-size:16.5px;line-height:16.5px;letter-spacing:0.494px;color:#000;">-499</div>
<div class="t" id="t29" style="left:555.98px;top:-0.27px;font-size:16.5px;line-height:16.5px;letter-spacing:0.959px;color:#000;">113.08</div>
<div class="t" id="t30" style="left:701.85px;top:-0.27px;font-size:16.5px;line-height:16.5px;letter-spacing:0.765px;color:#000;">13.3744</div>
<div class="t" id="t31" style="left:911.96px;top:-0.27px;font-size:16.5px;line-height:16.5px;letter-spacing:0.632px;color:#000;">-0.125867</div>
<div class="t" id="t32" style="left:9.65px;top:18.73px;font-size:16.5px;line-height:16.5px;letter-spacing:-0.000px;color:#000;">NEB_tutorial</div>
<div class="t" id="t33" style="left:121.97px;top:18.73px;font-size:16.5px;line-height:16.5px;letter-spacing:-0.745px;color:#000;">A</div>
<div class="t" id="t34" style="left:273.15px;top:18.73px;font-size:16.5px;line-height:16.5px;letter-spacing:0.823px;color:#000;">2</div>
<div class="t" id="t35" style="left:406.40px;top:18.73px;font-size:16.5px;line-height:16.5px;letter-spacing:0.823px;color:#000;">179</div>
<div class="t" id="t36" style="left:575.80px;top:18.73px;font-size:16.5px;line-height:16.5px;letter-spacing:0.721px;color:#000;">0.59</div>
<div class="t" id="t37" style="left:712.08px;top:18.73px;font-size:16.5px;line-height:16.5px;letter-spacing:0.755px;color:#000;">2.7266</div>
<div class="t" id="t38" style="left:917.00px;top:18.73px;font-size:16.5px;line-height:16.5px;letter-spacing:0.772px;color:#000;">0.003293</div>
<div class="t" id="t39" style="left:9.65px;top:37.73px;font-size:16.5px;line-height:16.5px;letter-spacing:-0.000px;color:#000;">NEB_tutorial</div>
<div class="t" id="t40" style="left:121.97px;top:37.73px;font-size:16.5px;line-height:16.5px;letter-spacing:-0.745px;color:#000;">A</div>
<div class="t" id="t41" style="left:273.05px;top:37.73px;font-size:16.5px;line-height:16.5px;letter-spacing:0.823px;color:#000;">3</div>
<div class="t" id="t42" style="left:406.35px;top:37.73px;font-size:16.5px;line-height:16.5px;letter-spacing:0.823px;color:#000;">313</div>
<div class="t" id="t43" style="left:565.53px;top:37.73px;font-size:16.5px;line-height:16.5px;letter-spacing:0.742px;color:#000;">19.94</div>
<div class="t" id="t44" style="left:702.19px;top:37.73px;font-size:16.5px;line-height:16.5px;letter-spacing:0.765px;color:#000;">10.8752</div>
<div class="t" id="t45" style="left:917.00px;top:37.73px;font-size:16.5px;line-height:16.5px;letter-spacing:0.772px;color:#000;">0.040316</div>
<div class="t" id="t46" style="left:9.65px;top:56.73px;font-size:16.5px;line-height:16.5px;letter-spacing:-0.000px;color:#000;">NEB_tutorial</div>
<div class="t" id="t47" style="left:121.97px;top:56.73px;font-size:16.5px;line-height:16.5px;letter-spacing:-0.745px;color:#000;">A</div>
<div class="t" id="t48" style="left:272.81px;top:56.73px;font-size:16.5px;line-height:16.5px;letter-spacing:0.823px;color:#000;">4</div>
<div class="t" id="t49" style="left:406.11px;top:56.73px;font-size:16.5px;line-height:16.5px;letter-spacing:0.823px;color:#000;">434</div>
<div class="t" id="t50" style="left:575.67px;top:56.73px;font-size:16.5px;line-height:16.5px;letter-spacing:0.721px;color:#000;">4.60</div>
<div class="t" id="t51" style="left:712.08px;top:56.73px;font-size:16.5px;line-height:16.5px;letter-spacing:0.755px;color:#000;">3.3986</div>
<div class="t" id="t52" style="left:917.05px;top:56.73px;font-size:16.5px;line-height:16.5px;letter-spacing:0.772px;color:#000;">0.024229</div>
<div class="t" id="t53" style="left:9.65px;top:75.73px;font-size:16.5px;line-height:16.5px;letter-spacing:-0.000px;color:#000;">NEB_tutorial</div>
<div class="t" id="t54" style="left:121.97px;top:75.73px;font-size:16.5px;line-height:16.5px;letter-spacing:-0.745px;color:#000;">A</div>
<div class="t" id="t55" style="left:273.02px;top:75.73px;font-size:16.5px;line-height:16.5px;letter-spacing:0.823px;color:#000;">5</div>
<div class="t" id="t56" style="left:406.27px;top:75.73px;font-size:16.5px;line-height:16.5px;letter-spacing:0.823px;color:#000;">510</div>
<div class="t" id="t57" style="left:565.87px;top:75.73px;font-size:16.5px;line-height:16.5px;letter-spacing:0.742px;color:#000;">17.52</div>
<div class="t" id="t58" style="left:712.07px;top:75.73px;font-size:16.5px;line-height:16.5px;letter-spacing:0.755px;color:#000;">2.6878</div>
<div class="t" id="t59" style="left:917.08px;top:75.73px;font-size:16.5px;line-height:16.5px;letter-spacing:0.772px;color:#000;">0.026461</div>
<div class="t" id="t60" style="left:9.65px;top:94.73px;font-size:16.5px;line-height:16.5px;letter-spacing:-0.000px;color:#000;">NEB_tutorial</div>
<div class="t" id="t61" style="left:121.97px;top:94.73px;font-size:16.5px;line-height:16.5px;letter-spacing:-0.745px;color:#000;">A</div>
<div class="t" id="t62" style="left:273.05px;top:94.73px;font-size:16.5px;line-height:16.5px;letter-spacing:0.823px;color:#000;">6</div>
<div class="t" id="t63" style="left:406.45px;top:94.73px;font-size:16.5px;line-height:16.5px;letter-spacing:0.823px;color:#000;">602</div>
<div class="t" id="t64" style="left:575.74px;top:94.73px;font-size:16.5px;line-height:16.5px;letter-spacing:0.721px;color:#000;">3.78</div>
<div class="t" id="t65" style="left:712.05px;top:94.73px;font-size:16.5px;line-height:16.5px;letter-spacing:0.755px;color:#000;">1.5675</div>
<div class="t" id="t66" style="left:917.05px;top:94.73px;font-size:16.5px;line-height:16.5px;letter-spacing:0.772px;color:#000;">0.021529</div>
<div class="t" id="t67" style="left:9.65px;top:113.73px;font-size:16.5px;line-height:16.5px;letter-spacing:-0.000px;color:#000;">NEB_tutorial</div>
<div class="t" id="t68" style="left:121.97px;top:113.73px;font-size:16.5px;line-height:16.5px;letter-spacing:-0.745px;color:#000;">A</div>
<div class="t" id="t69" style="left:273.15px;top:113.73px;font-size:16.5px;line-height:16.5px;letter-spacing:0.823px;color:#000;">7</div>
<div class="t" id="t70" style="left:406.34px;top:113.73px;font-size:16.5px;line-height:16.5px;letter-spacing:0.823px;color:#000;">638</div>
<div class="t" id="t71" style="left:565.87px;top:113.73px;font-size:16.5px;line-height:16.5px;letter-spacing:0.742px;color:#000;">40.22</div>
<div class="t" id="t72" style="left:712.14px;top:113.73px;font-size:16.5px;line-height:16.5px;letter-spacing:0.755px;color:#000;">6.7109</div>
<div class="t" id="t73" style="left:916.76px;top:113.73px;font-size:16.5px;line-height:16.5px;letter-spacing:0.772px;color:#000;">0.103304</div>
<div class="t" id="t74" style="left:9.65px;top:132.73px;font-size:16.5px;line-height:16.5px;letter-spacing:-0.000px;color:#000;">NEB_tutorial</div>
<div class="t" id="t75" style="left:121.97px;top:132.73px;font-size:16.5px;line-height:16.5px;letter-spacing:-0.745px;color:#000;">A</div>
<div class="t" id="t76" style="left:273.04px;top:132.73px;font-size:16.5px;line-height:16.5px;letter-spacing:0.823px;color:#000;">8</div>
<div class="t" id="t77" style="left:406.11px;top:132.73px;font-size:16.5px;line-height:16.5px;letter-spacing:0.823px;color:#000;">814</div>
<div class="t" id="t78" style="left:575.85px;top:132.73px;font-size:16.5px;line-height:16.5px;letter-spacing:0.721px;color:#000;">0.02</div>
<div class="t" id="t79" style="left:712.16px;top:132.73px;font-size:16.5px;line-height:16.5px;letter-spacing:0.755px;color:#000;">1.0371</div>
<div class="t" id="t80" style="left:917.08px;top:132.73px;font-size:16.5px;line-height:16.5px;letter-spacing:0.772px;color:#000;">0.026021</div>
<div class="t" id="t81" style="left:9.65px;top:151.73px;font-size:16.5px;line-height:16.5px;letter-spacing:-0.000px;color:#000;">NEB_tutorial</div>
<div class="t" id="t82" style="left:121.97px;top:151.73px;font-size:16.5px;line-height:16.5px;letter-spacing:-0.745px;color:#000;">A</div>
<div class="t" id="t83" style="left:273.10px;top:151.73px;font-size:16.5px;line-height:16.5px;letter-spacing:0.823px;color:#000;">9</div>
<div class="t" id="t84" style="left:406.84px;top:151.73px;font-size:16.5px;line-height:16.5px;letter-spacing:1.231px;color:#000;">911</div>
<div class="t" id="t85" style="left:575.75px;top:151.73px;font-size:16.5px;line-height:16.5px;letter-spacing:0.721px;color:#000;">0.56</div>
<div class="t" id="t86" style="left:712.08px;top:151.73px;font-size:16.5px;line-height:16.5px;letter-spacing:0.755px;color:#000;">1.3386</div>
<div class="t" id="t87" style="left:917.00px;top:151.73px;font-size:16.5px;line-height:16.5px;letter-spacing:0.772px;color:#000;">0.042086</div>
<div class="t" id="t88" style="left:9.65px;top:170.73px;font-size:16.5px;line-height:16.5px;letter-spacing:-0.000px;color:#000;">NEB_tutorial</div>
<div class="t" id="t89" style="left:121.97px;top:170.73px;font-size:16.5px;line-height:16.5px;letter-spacing:-0.745px;color:#000;">A</div>
<div class="t" id="t90" style="left:262.97px;top:170.73px;font-size:16.5px;line-height:16.5px;letter-spacing:0.823px;color:#000;">10</div>
<div class="t" id="t91" style="left:406.27px;top:170.73px;font-size:16.5px;line-height:16.5px;letter-spacing:0.823px;color:#000;">970</div>
<div class="t" id="t92" style="left:566.12px;top:170.73px;font-size:16.5px;line-height:16.5px;letter-spacing:0.987px;color:#000;">11.42</div>
<div class="t" id="t93" style="left:712.07px;top:170.73px;font-size:16.5px;line-height:16.5px;letter-spacing:0.755px;color:#000;">1.1748</div>
<div class="t" id="t94" style="left:916.99px;top:170.73px;font-size:16.5px;line-height:16.5px;letter-spacing:0.772px;color:#000;">0.041788</div>
<div class="t" id="t95" style="left:9.65px;top:189.73px;font-size:16.5px;line-height:16.5px;letter-spacing:-0.000px;color:#000;">NEB_tutorial</div>
<div class="t" id="t96" style="left:121.97px;top:189.73px;font-size:16.5px;line-height:16.5px;letter-spacing:-0.745px;color:#000;">A</div>
<div class="t" id="t97" style="left:263.74px;top:189.73px;font-size:16.5px;line-height:16.5px;letter-spacing:1.436px;color:#000;">11</div>
<div class="t" id="t98" style="left:396.11px;top:189.73px;font-size:16.5px;line-height:16.5px;letter-spacing:0.823px;color:#000;">1034</div>
<div class="t" id="t99" style="left:576.13px;top:189.73px;font-size:16.5px;line-height:16.5px;letter-spacing:1.028px;color:#000;">0.11</div>
<div class="t" id="t100" style="left:712.05px;top:189.73px;font-size:16.5px;line-height:16.5px;letter-spacing:0.755px;color:#000;">1.0525</div>
<div class="t" id="t101" style="left:917.10px;top:189.73px;font-size:16.5px;line-height:16.5px;letter-spacing:0.772px;color:#000;">0.042547</div>
<div class="t" id="t102" style="left:9.65px;top:208.73px;font-size:16.5px;line-height:16.5px;letter-spacing:-0.000px;color:#000;">NEB_tutorial</div>
<div class="t" id="t103" style="left:121.97px;top:208.73px;font-size:16.5px;line-height:16.5px;letter-spacing:-0.745px;color:#000;">A</div>
<div class="t" id="t104" style="left:263.15px;top:208.73px;font-size:16.5px;line-height:16.5px;letter-spacing:0.823px;color:#000;">12</div>
<div class="t" id="t105" style="left:396.57px;top:208.73px;font-size:16.5px;line-height:16.5px;letter-spacing:1.129px;color:#000;">1180</div>
<div class="t" id="t106" style="left:575.74px;top:208.73px;font-size:16.5px;line-height:16.5px;letter-spacing:0.721px;color:#000;">0.08</div>
<div class="t" id="t107" style="left:712.05px;top:208.73px;font-size:16.5px;line-height:16.5px;letter-spacing:0.755px;color:#000;">1.4695</div>
<div class="t" id="t108" style="left:917.10px;top:208.73px;font-size:16.5px;line-height:16.5px;letter-spacing:0.772px;color:#000;">0.077432</div>
<div class="t" id="t109" style="left:9.65px;top:227.73px;font-size:16.5px;line-height:16.5px;letter-spacing:-0.000px;color:#000;">NEB_tutorial</div>
<div class="t" id="t110" style="left:121.97px;top:227.73px;font-size:16.5px;line-height:16.5px;letter-spacing:-0.745px;color:#000;">A</div>
<div class="t" id="t111" style="left:263.05px;top:227.73px;font-size:16.5px;line-height:16.5px;letter-spacing:0.823px;color:#000;">13</div>
<div class="t" id="t112" style="left:396.27px;top:227.73px;font-size:16.5px;line-height:16.5px;letter-spacing:0.823px;color:#000;">1300</div>
<div class="t" id="t113" style="left:565.82px;top:227.73px;font-size:16.5px;line-height:16.5px;letter-spacing:0.742px;color:#000;">27.89</div>
<div class="t" id="t114" style="left:712.08px;top:227.73px;font-size:16.5px;line-height:16.5px;letter-spacing:0.755px;color:#000;">1.4843</div>
<div class="t" id="t115" style="left:917.00px;top:227.73px;font-size:16.5px;line-height:16.5px;letter-spacing:0.772px;color:#000;">0.094933</div>
<div class="t" id="t116" style="left:9.65px;top:246.73px;font-size:16.5px;line-height:16.5px;letter-spacing:-0.000px;color:#000;">NEB_tutorial</div>
<div class="t" id="t117" style="left:121.97px;top:246.73px;font-size:16.5px;line-height:16.5px;letter-spacing:-0.745px;color:#000;">A</div>
<div class="t" id="t118" style="left:262.81px;top:246.73px;font-size:16.5px;line-height:16.5px;letter-spacing:0.823px;color:#000;">14</div>
<div class="t" id="t119" style="left:396.45px;top:246.73px;font-size:16.5px;line-height:16.5px;letter-spacing:0.823px;color:#000;">1347</div>
<div class="t" id="t120" style="left:555.78px;top:246.73px;font-size:16.5px;line-height:16.5px;letter-spacing:0.755px;color:#000;">141.53</div>
<div class="t" id="t121" style="left:712.07px;top:246.73px;font-size:16.5px;line-height:16.5px;letter-spacing:0.755px;color:#000;">4.5518</div>
<div class="t" id="t122" style="left:916.92px;top:246.73px;font-size:16.5px;line-height:16.5px;letter-spacing:0.772px;color:#000;">0.312420</div>
<div class="t" id="t123" style="left:9.65px;top:265.73px;font-size:16.5px;line-height:16.5px;letter-spacing:-0.000px;color:#000;">NEB_tutorial</div>
<div class="t" id="t124" style="left:121.97px;top:265.73px;font-size:16.5px;line-height:16.5px;letter-spacing:-0.745px;color:#000;">A</div>
<div class="t" id="t125" style="left:263.02px;top:265.73px;font-size:16.5px;line-height:16.5px;letter-spacing:0.823px;color:#000;">15</div>
<div class="t" id="t126" style="left:396.43px;top:265.73px;font-size:16.5px;line-height:16.5px;letter-spacing:0.823px;color:#000;">1401</div>
<div class="t" id="t127" style="left:575.50px;top:265.73px;font-size:16.5px;line-height:16.5px;letter-spacing:0.721px;color:#000;">1.64</div>
<div class="t" id="t128" style="left:712.39px;top:265.73px;font-size:16.5px;line-height:16.5px;letter-spacing:0.959px;color:#000;">1.1167</div>
<div class="t" id="t129" style="left:916.92px;top:265.73px;font-size:16.5px;line-height:16.5px;letter-spacing:0.772px;color:#000;">0.082950</div>
<div class="t" id="t130" style="left:9.65px;top:284.73px;font-size:16.5px;line-height:16.5px;letter-spacing:-0.000px;color:#000;">NEB_tutorial</div>
<div class="t" id="t131" style="left:121.97px;top:284.73px;font-size:16.5px;line-height:16.5px;letter-spacing:-0.745px;color:#000;">A</div>
<div class="t" id="t132" style="left:263.05px;top:284.73px;font-size:16.5px;line-height:16.5px;letter-spacing:0.823px;color:#000;">16</div>
<div class="t" id="t133" style="left:396.43px;top:284.73px;font-size:16.5px;line-height:16.5px;letter-spacing:0.823px;color:#000;">1561</div>
<div class="t" id="t134" style="left:575.80px;top:284.73px;font-size:16.5px;line-height:16.5px;letter-spacing:0.721px;color:#000;">8.09</div>
<div class="t" id="t135" style="left:711.84px;top:284.73px;font-size:16.5px;line-height:16.5px;letter-spacing:0.755px;color:#000;">3.2164</div>
<div class="t" id="t136" style="left:916.76px;top:284.73px;font-size:16.5px;line-height:16.5px;letter-spacing:0.772px;color:#000;">0.296454</div>
</div>
<div class="r" style="left:1201px;top:531px;width:14px;height:322px;background:#e8e8e8;"></div>
<div class="r" style="left:1202px;top:531px;width:1px;height:322px;background:#8a8a8a;"></div>
<div class="r" style="left:1214px;top:531px;width:1px;height:322px;background:#ffffff;"></div>
<div class="r" style="left:1203px;top:531px;width:11px;height:12px;background:#b4b4b4;"></div>
<svg class="r" style="left:1203px;top:531px" width="11" height="12"><path d="M5.5 1.5 L10 10.5 L1 10.5 Z" fill="#ececec"/></svg>
<div class="r" style="left:1203px;top:543px;width:11px;height:211px;background:#ececec;border-top:1px solid #fafafa;border-left:1px solid #fafafa;border-right:1px solid #8a8a8a;border-bottom:1px solid #8a8a8a;box-sizing:border-box;"></div>
<div class="r" style="left:1203px;top:754px;width:11px;height:88px;background:#b4b4b4;"></div>
<div class="r" style="left:1203px;top:842px;width:11px;height:10px;background:#b4b4b4;"></div>
<div class="r" style="left:1203px;top:842px;width:11px;height:1px;background:#ffffff;"></div>
<svg class="r" style="left:1203px;top:842px" width="11" height="11"><path d="M1 1.5 L10 1.5 L5.5 10 Z" fill="#ececec"/><path d="M10 1.5 L5.5 10" stroke="#707070" stroke-width="1"/></svg>
<div class="r" style="left:0px;top:853px;width:1216px;height:2px;background:#e8e8e8;"></div>
</body></html>
